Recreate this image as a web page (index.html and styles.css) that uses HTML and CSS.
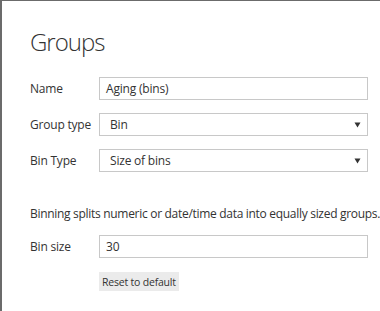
FILE: index.html
```html
<!DOCTYPE html>
<html lang="en">

<head>
    <meta charset="UTF-8">
    <meta name="viewport" content="width=device-width, initial-scale=1.0">
    <title>Groups</title>

    <link rel="stylesheet" href="styles.css">
</head>

<body>

    <div class="groups_panel">
        <h1 class="title">Groups</h1>

        <div class="form-grid">
            <label>Name</label>
            <div class="field">Aging (bins)</div>

            <label>Group type</label>
            <div class="field select">
                <span>Bin</span>
                <svg class="arrow" width="7" height="6" viewBox="0 0 7 6"><polygon points="0.5,0.5 6.5,0.5 3.5,5.5" fill="#333" /></svg>
            </div>

            <label>Bin Type</label>
            <div class="field select">
                <span>Size of bins</span>
                <svg class="arrow" width="7" height="6" viewBox="0 0 7 6"><polygon points="0.5,0.5 6.5,0.5 3.5,5.5" fill="#333" /></svg>
            </div>
        </div>

        <p class="description">Binning splits numeric or date/time data into equally sized groups.</p>

        <div class="form-grid">
            <label>Bin size</label>
            <div class="field">30</div>

            <span></span>
            <div class="actions">
                <button class="reset">Reset to default</button>
            </div>
        </div>
    </div>

</body>

</html>
```

FILE: styles.css
```css
html,
body {
    margin: 0;
    padding: 0;
}

body {
    background-color: white;
    font-family: "Open Sans", "Noto Sans", sans-serif;
    color: #333;
}

.groups_panel {
    border-left: 2px solid #6b6b6b;
    border-top: 1px solid #6b6b6b;
    height: 311px;
    padding: 0 12px 0 28px;
    box-sizing: border-box;
}

.title {
    margin: 0;
    padding-top: 25px;
    font-size: 24px;
    font-weight: 300;
    letter-spacing: -1px;
    line-height: 32px;
    color: #333;
}

.form-grid {
    display: grid;
    grid-template-columns: 69px 269px;
    row-gap: 13px;
    align-items: center;
}

.form-grid:first-of-type {
    margin-top: 19px;
}

label {
    font-size: 12px;
    letter-spacing: -0.2px;
    color: #333;
}

.field {
    height: 23px;
    box-sizing: border-box;
    border: 1px solid #c8c8c8;
    font-size: 12px;
    letter-spacing: -0.2px;
    line-height: 21px;
    padding: 0 6px;
    color: #333;
}

.select {
    display: flex;
    justify-content: space-between;
    align-items: center;
    padding: 0 6px 0 10px;
}

.description {
    margin: 34px 0 13px;
    font-size: 12px;
    letter-spacing: -0.3px;
    line-height: 16px;
    white-space: nowrap;
}

.actions {
    display: flex;
    margin-top: 1px;
}

.reset {
    border: 0;
    background-color: #ebebeb;
    font-family: inherit;
    font-size: 10.5px;
    letter-spacing: -0.2px;
    color: #333;
    height: 19px;
    padding: 0 3px;
}
```
